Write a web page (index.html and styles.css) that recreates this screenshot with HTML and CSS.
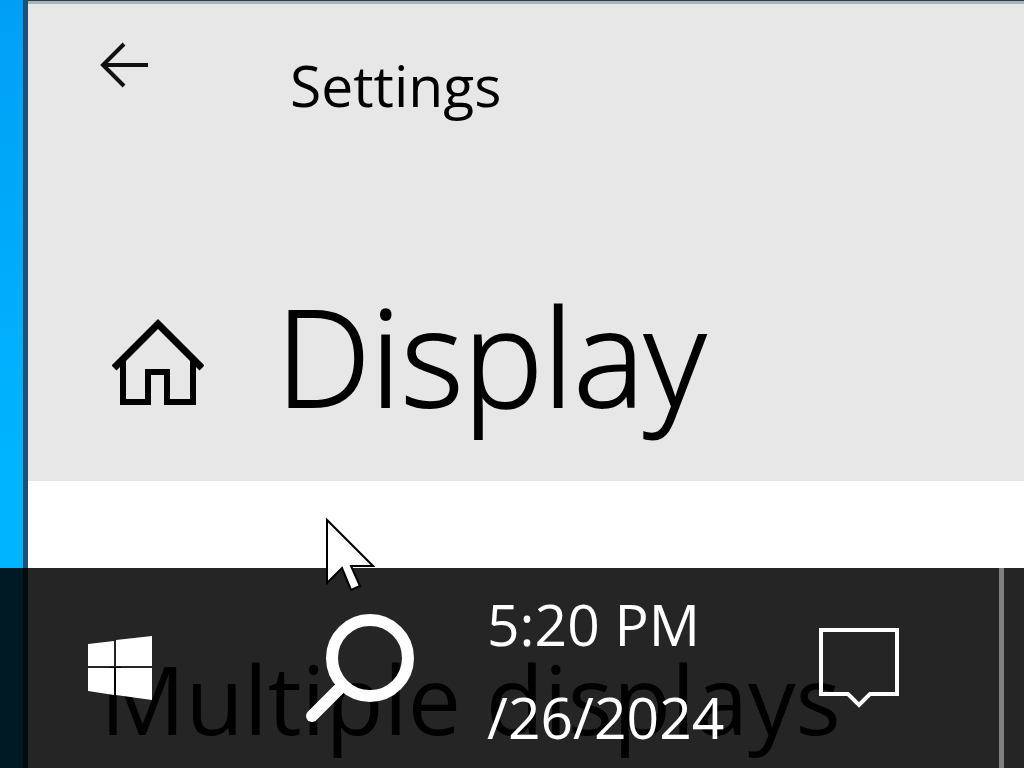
FILE: index.html
```html
<!DOCTYPE html>
<html lang="en">
  <head>
    <meta charset="UTF-8" />
    <meta name="viewport" content="width=device-width, initial-scale=1.0" />
    <title>Settings</title>
    <link rel="stylesheet" href="styles.css">
  </head>
  <body>
    <main class="window">
      <div class="window-top">
        <header class="title-bar">
          <button class="back" type="button" aria-label="Back">
            <svg width="48" height="46" viewBox="0 0 48 46" fill="none" stroke="#111" stroke-width="4">
              <path d="M48 23H3M24 2L3 23l21 21" />
            </svg>
          </button>
          <span class="title">Settings</span>
        </header>
        <div class="page-head">
          <button class="home" type="button" aria-label="Home">
            <svg width="92" height="88" viewBox="0 0 92 88" fill="none" stroke="#000" stroke-width="6">
              <path d="M2 50L46 6l44 44" stroke-width="7" />
              <path d="M11 41v43h19M81 41v43H62" />
              <path d="M28 84h8V54h19v30h9" />
            </svg>
          </button>
          <h1 class="page-title">Display</h1>
        </div>
      </div>
      <section class="content">
        <h2 class="section-title">Multiple displays</h2>
      </section>
    </main>

    <footer class="taskbar">
      <button class="start" type="button" aria-label="Start">
        <svg width="64" height="64" viewBox="0 0 64 64" fill="#fff">
          <path d="M0 8l26-3v25H0zM28 4l36-4v30H28zM0 32h26v27L0 55zM28 32h36v32l-36-5z" />
        </svg>
      </button>
      <button class="search" type="button" aria-label="Search">
        <svg width="108" height="108" viewBox="0 0 108 108" fill="none" stroke="#fff">
          <circle cx="64" cy="44" r="38" stroke-width="12" />
          <path d="M36 72L6 102" stroke-width="12" stroke-linecap="round" />
        </svg>
      </button>
      <div class="clock">
        <time>5:20 PM</time>
        <time>/26/2024</time>
      </div>
      <button class="notifications" type="button" aria-label="Notifications">
        <svg width="80" height="80" viewBox="0 0 80 80" fill="none" stroke="#fff" stroke-width="4">
          <path d="M2 2h76v64H51L40 77 29 66H2z" />
        </svg>
      </button>
      <button class="show-desktop" type="button" aria-label="Show desktop"></button>
    </footer>

    <svg class="cursor" width="50" height="76" viewBox="0 0 50 76" fill="#fff" stroke="#000" stroke-width="2">
      <path d="M2 3v63l15-15 9 22 9-4-9-20h22z" />
    </svg>
  </body>
</html>
```
FILE: styles.css
```css
* {
  box-sizing: border-box;
}
body {
  position: relative;
  display: flex;
  height: 100vh;
  margin: 0;
  padding-left: 23px;
  overflow: hidden;
  background: linear-gradient(#009ff5, #00b4ff 60%);
  font-family: "Segoe UI", "Open Sans", sans-serif;
  color: #000;
}
button {
  display: flex;
  padding: 0;
  border: 0;
  background: none;
}
h1,
h2 {
  margin: 0;
  font-weight: 400;
}
.window {
  flex: 1;
  border-left: 5px solid #1b5078;
  background-color: #fff;
  white-space: nowrap;
}
.window-top {
  border-top: 1px solid #2b3f49;
  padding-bottom: 24px;
  background-color: #e7e7e7;
  box-shadow: inset 0 3px #a9b5ba;
}
.title-bar {
  display: flex;
  align-items: flex-start;
  gap: 142px;
  padding: 41px 72px 0;
}
.title {
  font-size: 57px;
  line-height: 86px;
}
.page-head {
  display: flex;
  align-items: center;
  gap: 72px;
  padding: 138px 84px 0;
}
.page-title {
  padding-bottom: 12px;
  font-size: 134px;
  font-weight: 300;
  line-height: 179px;
  -webkit-text-stroke: 2px #000;
}
.content {
  padding: 147px 72px 0;
}
.section-title {
  font-size: 95px;
  line-height: 140px;
}

/* taskbar lies over the open window */
.taskbar {
  position: absolute;
  right: 0;
  bottom: 0;
  left: 0;
  display: flex;
  align-items: center;
  height: 200px;
  padding-left: 88px;
  background-color: rgba(0, 0, 0, 0.855);
  color: #fff;
}
.search {
  margin-left: 154px;
}
.clock {
  display: flex;
  flex-direction: column;
  flex: 1;
  margin-left: 73px;
  padding-top: 5px;
  font-size: 57px;
  line-height: 93px;
}
.show-desktop {
  width: 25px;
  height: 100%;
  margin-left: 100px;
  border-left: 5px solid #808080;
}
.cursor {
  position: absolute;
  top: 517px;
  left: 325px;
}
```
